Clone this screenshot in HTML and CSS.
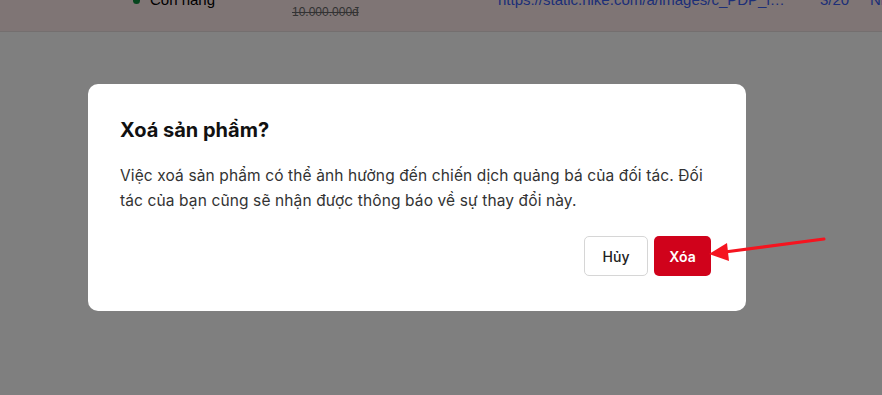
FILE: index.html
```html
<!DOCTYPE html>
<html lang="vi">
<head>
    <meta charset="UTF-8">
    <meta name="viewport" content="width=device-width, initial-scale=1.0">
    <title>Xoá sản phẩm</title>
    <link rel="stylesheet" href="styles.css">
</head>
<body>
    <!-- Product table row behind the dialog -->
    <div class="product-row">
        <div class="cell status"><span class="dot"></span>Còn hàng</div>
        <div class="cell price"><s>10.000.000đ</s></div>
        <div class="cell link">https://static.nike.com/a/images/c_PDP_i/72f4a1b</div>
        <div class="cell count">3/20</div>
        <div class="cell more">Nike</div>
    </div>

    <!-- Confirm dialog -->
    <div class="overlay">
        <div class="modal">
            <h2 class="modal-title">Xoá sản phẩm?</h2>
            <p class="modal-text">Việc xoá sản phẩm có thể ảnh hưởng đến chiến dịch quảng bá của đối tác. Đối tác của bạn cũng sẽ nhận được thông báo về sự thay đổi này.</p>
            <div class="modal-actions">
                <button class="btn btn-cancel">Hủy</button>
                <button class="btn btn-delete">Xóa</button>
            </div>
        </div>

        <!-- annotation arrow -->
        <svg class="arrow" width="120" height="30" viewBox="0 0 120 30">
            <line x1="117" y1="5" x2="14" y2="18.5" stroke="#f5141f" stroke-width="3" stroke-linecap="round"/>
            <polygon points="2,20 20,9 22,27" fill="#f5141f"/>
        </svg>
    </div>
</body>
</html>
```

FILE: styles.css
```css
/* Global */
body {
    margin: 0;
    font-family: Inter, "Noto Sans", sans-serif;
    background-color: #ffffff;
    height: 395px;
    overflow: hidden;
}

/* Table row (scrolled, partly hidden) */
.product-row {
    display: flex;
    align-items: flex-start;
    height: 31px;
    background-color: #feeaea;
    border-bottom: 1px solid #e8dede;
    overflow: hidden;
    font-family: "Liberation Sans", Arial, sans-serif;
    font-size: 15px;
    line-height: 16px;
}

.cell {
    flex-shrink: 0;
    margin-top: -8px;
    white-space: nowrap;
}

.status {
    margin-left: 133px;
    width: 159px;
    color: #000;
    display: flex;
    align-items: center;
    gap: 10px;
}

.dot {
    width: 7px;
    height: 7px;
    border-radius: 50%;
    background-color: #0a8a3a;
}

.price {
    width: 206px;
    margin-top: 4px;
    font-size: 12px;
    color: #666;
}

.link {
    width: 288px;
    margin-right: 34px;
    overflow: hidden;
    text-overflow: ellipsis;
    color: #3a5ef0;
}

.count {
    width: 50px;
    color: #3a5ef0;
}

.more {
    color: #3a5ef0;
}

/* Overlay + dialog */
.overlay {
    position: fixed;
    inset: 0;
    background-color: rgba(0, 0, 0, 0.5);
    display: flex;
    align-items: center;
    padding-left: 88px;
}

.modal {
    width: 591px;
    background-color: #ffffff;
    border-radius: 10px;
    padding: 32px 35px 35px 32px;
}

.modal-title {
    margin: 0 0 19px;
    font-size: 20px;
    font-weight: 700;
    line-height: 28px;
    color: #111;
}

.modal-text {
    margin: 0 0 23px;
    font-size: 15.5px;
    letter-spacing: 0.12px;
    line-height: 25px;
    color: #333;
}

.modal-actions {
    display: flex;
    justify-content: flex-end;
    gap: 6px;
}

.btn {
    font-family: inherit;
    font-size: 14px;
    font-weight: 600;
    height: 40px;
    border-radius: 5px;
    cursor: pointer;
    padding: 0;
}

.btn-cancel {
    background-color: #fff;
    border: 1px solid #d6d6d6;
    color: #222;
    font-weight: 500;
    width: 64px;
}

.btn-delete {
    background-color: #d0021b;
    border: none;
    color: #fff;
    width: 57px;
}

.arrow {
    position: absolute;
    left: 707px;
    top: 234px;
}
```
